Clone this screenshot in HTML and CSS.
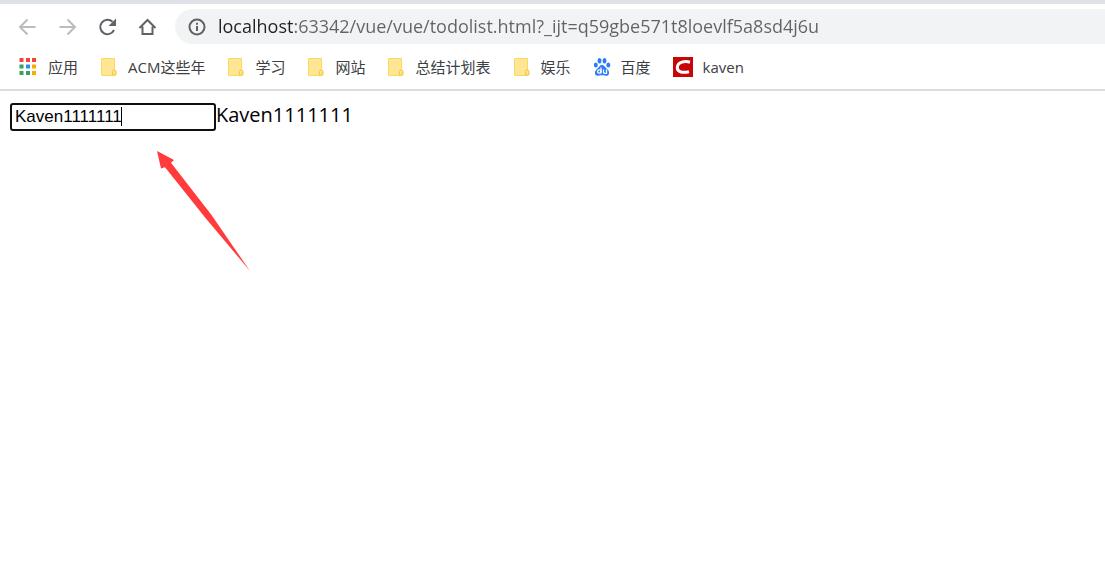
FILE: index.html
```
<!DOCTYPE html>
<html lang="zh-CN">
<head>
  <meta charset="UTF-8" />
  <title>todolist</title>
  <link rel="stylesheet" href="styles.css">
</head>
<body>

  <svg class="sprite" aria-hidden="true">
    <symbol id="folder" viewBox="0 0 18 20">
      <path d="M2 1.500h12.500v11.500q1.500 0 1.500 2v2q0 1.500-1.500 1.500H2q-.5 0-.5-.5V2q0-.5.5-.5z" fill="#ffe694" stroke="#fbd95f"/>
      <path d="M12.500 18v-3.500q0-1.500 1.500-1.500t1.800 1.500V17q0 1-1 1z" fill="#ffe48a" stroke="#f3c94c"/>
    </symbol>
  </svg>

  <header class="browser">
    <div class="toolbar">
      <button class="nav-button off" aria-label="后退">
        <svg width="20" height="20" viewBox="0 0 20 20"><path d="M17.500 10H3M9.500 2.500L2 10l7.500 7.500"/></svg>
      </button>
      <button class="nav-button off" aria-label="前进">
        <svg width="20" height="20" viewBox="0 0 20 20"><path d="M1.500 10H16M9.500 2.500L17 10l-7.500 7.500"/></svg>
      </button>
      <button class="nav-button" aria-label="刷新">
        <svg width="20" height="20" viewBox="0 0 20 20"><path d="M16 13A7.200 7.200 0 1 1 14.500 4.800"/><path class="solid" d="M18 1.500v7.500h-7.500z"/></svg>
      </button>
      <button class="nav-button" aria-label="主页">
        <svg width="20" height="20" viewBox="0 0 20 20"><path d="M1.500 11L9.500 3l8 8M4.500 9.500V17h10V9.500"/></svg>
      </button>
      <div class="address">
        <svg width="18" height="18" viewBox="0 0 18 18"><circle cx="9" cy="9" r="7.500"/><path d="M9 8v5M9 4.800v2"/></svg>
        <input class="url" type="text" aria-label="地址" value="localhost:63342/vue/vue/todolist.html?_ijt=q59gbe571t8loevlf5a8sd4j6u" spellcheck="false">
      </div>
    </div>

    <nav class="bookmarks">
      <a href="#">
        <svg width="20" height="20" viewBox="0 0 20 20">
          <g fill="#f44336"><path d="M1.500 1h4v4h-4zM8 1h4v4H8zM14 1h4v4h-4z"/></g>
          <g fill="#34a35a"><path d="M1.500 7.500h4v4h-4zM1.500 14h4v4h-4zM8 14h4v4H8z"/></g>
          <path d="M8 7.500h4v4H8z" fill="#2d8cf5"/>
          <g fill="#f9ab00"><path d="M14 7.500h4v4h-4zM14 14h4v4h-4z"/></g>
        </svg>
        应用
      </a>
      <a href="#"><svg width="18" height="20"><use href="#folder"/></svg>ACM这些年</a>
      <a href="#"><svg width="18" height="20"><use href="#folder"/></svg>学习</a>
      <a href="#"><svg width="18" height="20"><use href="#folder"/></svg>网站</a>
      <a href="#"><svg width="18" height="20"><use href="#folder"/></svg>总结计划表</a>
      <a href="#"><svg width="18" height="20"><use href="#folder"/></svg>娱乐</a>
      <a href="#">
        <svg width="18" height="20" viewBox="0 0 18 20">
          <g fill="#2b7cf6">
            <ellipse cx="2.800" cy="8" rx="2" ry="2.600"/>
            <ellipse cx="6.500" cy="3.800" rx="2" ry="2.700"/>
            <ellipse cx="11.500" cy="3.800" rx="2" ry="2.700"/>
            <ellipse cx="15.300" cy="8" rx="2" ry="2.600"/>
            <path d="M9 8c2 0 3 2 4.500 3.500S16.500 14 16 16.500 13.500 19 12 18.500s-4-.5-6 0-3.700 0-4-2S3 12.800 4.500 11.500 7 8 9 8z"/>
          </g>
          <g fill="none" stroke="#fff" stroke-width="1.300">
            <path d="M8 10.500v6M10.500 12.500v2.500q0 1.300 1.300 1.300H13.500v-3.800"/>
            <circle cx="6.300" cy="14.500" r="1.700"/>
          </g>
        </svg>
        百度
      </a>
      <a href="#">
        <svg width="20" height="20" viewBox="0 0 20 20">
          <path d="M0 0h20v20H0z" fill="#c90606"/>
          <path d="M17 5.200C12 3.700 4.500 4.700 4.300 10.500c-.1 5 6 5.500 11.700 4.200" fill="none" stroke="#fff" stroke-width="3"/>
        </svg>
        kaven
      </a>
    </nav>
  </header>

  <main id="app">
    <div class="row">
      <div class="field">
        <input class="todo-input" id="todoInput" type="text" aria-label="内容" value="Kaven1111111" spellcheck="false">
        <span class="caret"></span>
      </div>
      <output class="echo" id="echo" for="todoInput">Kaven1111111</output>
    </div>
    <svg class="arrow" width="94" height="122" viewBox="0 0 94 122">
      <path d="M1 1l17 9-3 2.700L55.500 65 94 121 49.500 68 9 17.300 5 18.500z" fill="#ff3b3b"/>
    </svg>
  </main>

  <script>
    const todoInput = document.getElementById("todoInput");
    todoInput.addEventListener("input", () => {
      document.getElementById("echo").textContent = todoInput.value;
    });
  </script>

</body>
</html>
```

FILE: styles.css
```
* {
  box-sizing: border-box;
}

body {
  margin: 0;
  min-height: 100vh;
  background-color: white;
  font-family: "Open Sans", "Noto Sans CJK SC", sans-serif;
}

svg {
  display: block;
  flex: none;
}

.sprite {
  display: none;
}

.browser {
  border-top: 4px solid #dee1e6;
  border-bottom: 2px solid #dadce0;
}

.toolbar {
  display: flex;
  align-items: center;
  padding: 5px 0 0 8px;
}

.nav-button {
  width: 40px;
  height: 35px;
  padding: 0 10px;
  border: none;
  background: none;
  color: #5f6368;
  cursor: pointer;
}

.nav-button.off {
  color: #babcbe;
}

.nav-button path,
.address svg {
  fill: none;
  stroke: currentColor;
  stroke-width: 2;
}

.nav-button .solid {
  fill: currentColor;
  stroke: none;
}

.address {
  display: flex;
  flex: 1;
  align-items: center;
  gap: 12px;
  height: 35px;
  margin-left: 7px;
  padding-left: 13px;
  border-radius: 18px 0 0 18px;
  background-color: #f1f3f4;
  color: #5f6368;
}

/* host part is darker than the rest of the address */
.url {
  flex: 1;
  min-width: 0;
  height: 29px;
  padding: 0 0 2px;
  border: none;
  outline: none;
  background: linear-gradient(90deg, #202124 76px, #5f6368 76px);
  -webkit-background-clip: text;
  background-clip: text;
  color: #5f6368;
  -webkit-text-fill-color: transparent;
  font-family: inherit;
  font-size: 18px;
}

.bookmarks {
  display: flex;
  gap: 22px;
  height: 45px;
  padding: 0 18px;
  align-items: center;
}

.bookmarks a {
  display: flex;
  align-items: center;
  gap: 10px;
  color: #3c4043;
  font-size: 15px;
  line-height: 20px;
  text-decoration: none;
  white-space: nowrap;
}

#app {
  padding: 12px 10px;
}

.row {
  display: flex;
  align-items: flex-start;
}

.field {
  position: relative;
}

.todo-input {
  display: block;
  width: 206px;
  height: 28px;
  padding: 0 3px;
  border: 2px solid #101010;
  border-radius: 3px;
  outline: none;
  background-color: white;
  color: black;
  font-family: "Liberation Sans", Arial, sans-serif;
  font-size: 17px;
}

.caret {
  position: absolute;
  top: 4px;
  left: 111px;
  width: 1px;
  height: 19px;
  background-color: black;
}

.echo {
  color: black;
  font-size: 20px;
  line-height: 24px;
}

.arrow {
  margin: 19px 0 0 146px;
}
```
